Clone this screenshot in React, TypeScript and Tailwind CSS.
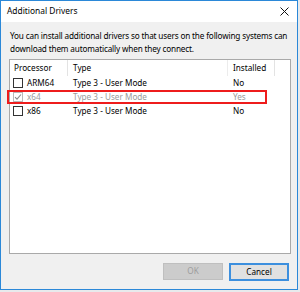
import React from 'react';

const rows = [
  { proc: 'ARM64', type: 'Type 3 - User Mode', installed: 'No', checked: false, dim: false },
  { proc: 'x64', type: 'Type 3 - User Mode', installed: 'Yes', checked: true, dim: true },
  { proc: 'x86', type: 'Type 3 - User Mode', installed: 'No', checked: false, dim: false },
];

function CheckBox({ checked, dim }: { checked: boolean; dim: boolean }) {
  return (
    <span
      className={`flex h-[10px] w-[10px] shrink-0 items-center justify-center border bg-white ${
        dim ? 'border-[#b8b8b8]' : 'border-[#333333]'
      }`}
    >
      {checked && (
        <svg width="8" height="8" viewBox="0 0 8 8">
          <path d="M1 4.2 L3 6.2 L7 1.5" fill="none" stroke="#8a8a8a" strokeWidth="1.1" />
        </svg>
      )}
    </span>
  );
}

export default function App() {
  return (
    <div className="relative h-[292px] w-[300px] bg-[#e8eaec] font-['Noto_Sans',sans-serif] text-[8.2px] text-black">
      <div className="flex h-[290px] w-[298px] flex-col border border-[#2b88d8] bg-[#f0f0f0]">
        <div className="flex h-[21px] items-center justify-between bg-white pl-[6px] pr-[6px]">
          <span className="text-[8.4px] leading-none">Additional Drivers</span>
          <svg width="9" height="9" viewBox="0 0 9 9" className="mr-[2px]">
            <path d="M0.5 0.5 L8.5 8.5 M8.5 0.5 L0.5 8.5" stroke="#111" strokeWidth="1" />
          </svg>
        </div>

        <div className="flex flex-1 flex-col px-[8px] pt-[7px]">
          <p className="whitespace-nowrap pl-[1px] leading-[13px] tracking-[-0.16px]">
            You can install additional drivers so that users on the following systems can
            <br />
            download them automatically when they connect.
          </p>

          <div className="mt-[4px] h-[195px] w-[282px] border border-[#a9a9a9] bg-white">
            <div className="flex h-[16px] items-center">
              <div className="flex h-full w-[58px] items-center border-r border-[#e3e3e3] pl-[4px]">Processor</div>
              <div className="flex h-full w-[160px] items-center border-r border-[#ececec] pl-[5px]">Type</div>
              <div className="flex h-full w-[47px] items-center border-r border-[#e3e3e3] pl-[5px]">Installed</div>
            </div>
            {rows.map((r) => (
              <div key={r.proc} className={`flex h-[14px] items-center ${r.dim ? 'text-[#9a9a9a]' : ''}`}>
                <div className="flex w-[58px] items-center gap-[4px] pl-[3px]">
                  <CheckBox checked={r.checked} dim={r.dim} />
                  <span>{r.proc}</span>
                </div>
                <div className="w-[160px] pl-[5px]">{r.type}</div>
                <div className="w-[47px] pl-[5px]">{r.installed}</div>
              </div>
            ))}
          </div>

          <div className="mt-[9px] flex justify-end gap-[6px]">
            <button
              type="button"
              disabled
              className="h-[17px] w-[60px] border border-[#bfbfbf] bg-[#cccccc] text-[8.2px] leading-none text-[#9d9d9d]"
            >
              OK
            </button>
            <button
              type="button"
              className="h-[18px] w-[60px] border-2 border-[#3c8fde] bg-[#e1e1e1] text-[8.2px] leading-none"
            >
              Cancel
            </button>
          </div>
        </div>
      </div>

      <div className="absolute left-[7px] top-[90px] h-[14px] w-[260px] border-2 border-[#ee1c1c]" />
    </div>
  );
}
